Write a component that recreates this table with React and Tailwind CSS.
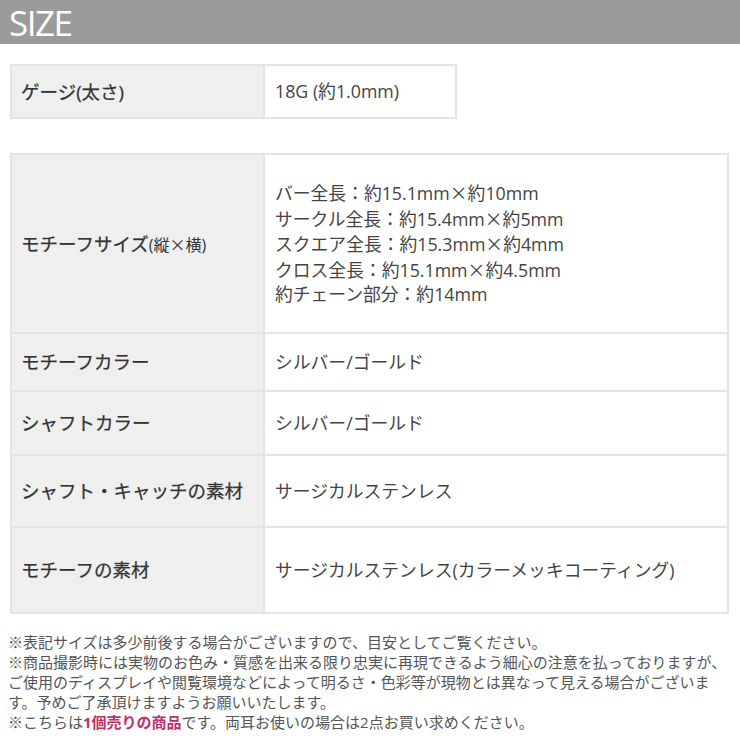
import React from "react";

const font = { fontFamily: '"Open Sans", "Noto Sans CJK JP", sans-serif' };
const cjk = { fontFamily: '"Noto Sans CJK JP", sans-serif' };

function X() {
  return <span style={cjk}>×</span>;
}

function Row({ label, small, children, h, first }) {
  return (
    <div className={`flex ${first ? "" : "border-t-2 border-[#e4e4e4]"}`} style={{ height: h }}>
      <div className="w-[253px] shrink-0 bg-[#efefef] border-r-2 border-[#e4e4e4] flex items-center pl-[9px] text-[18.5px] text-[#333] [-webkit-text-stroke:0.25px_#333]">
        <span>
          {label}
          {small && (
            <span className="text-[16px] [-webkit-text-stroke:0px]">
              (縦<X />横)
            </span>
          )}
        </span>
      </div>
      <div className="flex-1 bg-white flex items-center pl-[10px] text-[17.8px] text-[#444]">
        {children}
      </div>
    </div>
  );
}

export default function App() {
  return (
    <div className="w-[740px] h-[740px] bg-white overflow-hidden" style={font}>
      <div className="h-[44px] bg-[#9b9b9b] flex items-center pl-[9px]">
        <span className="text-white text-[35px] leading-none tracking-[-1.5px]" style={{ fontFamily: '"Open Sans", sans-serif' }}>SIZE</span>
      </div>

      <div className="px-[10px]">
        <div className="mt-[20px] w-[447px] border-2 border-[#e4e4e4]">
          <Row label="ゲージ(太さ)" h={51} first>
            18G (約1.0mm)
          </Row>
        </div>

        <div className="mt-[34px] w-[719px] border-2 border-[#e4e4e4]">
          <Row label="モチーフサイズ" small h={177} first>
            <div className="leading-[24.5px]">
              <div>バー全長：約15.1mm<X />約10mm</div>
              <div>サークル全長：約15.4mm<X />約5mm</div>
              <div>スクエア全長：約15.3mm<X />約4mm</div>
              <div>クロス全長：約15.1mm<X />約4.5mm</div>
              <div>約チェーン部分：約14mm</div>
            </div>
          </Row>
          <Row label="モチーフカラー" h={58}>シルバー/ゴールド</Row>
          <Row label="シャフトカラー" h={64}>シルバー/ゴールド</Row>
          <Row label="シャフト・キャッチの素材" h={72}>サージカルステンレス</Row>
          <Row label="モチーフの素材" h={86}>サージカルステンレス(カラーメッキコーティング)</Row>
        </div>
      </div>

      <div className="mt-[18px] pl-[8px] text-[15px] leading-[20px] text-[#555] whitespace-nowrap">
        <div>※表記サイズは多少前後する場合がございますので、目安としてご覧ください。</div>
        <div>※商品撮影時には実物のお色み・質感を出来る限り忠実に再現できるよう細心の注意を払っておりますが、</div>
        <div>ご使用のディスプレイや閲覧環境などによって明るさ・色彩等が現物とは異なって見える場合がございま</div>
        <div>す。予めご了承頂けますようお願いいたします。</div>
        <div>
          ※こちらは<span className="text-[#c0306a] font-bold">1個売りの商品</span>です。両耳お使いの場合は2点お買い求めください。
        </div>
      </div>
    </div>
  );
}
